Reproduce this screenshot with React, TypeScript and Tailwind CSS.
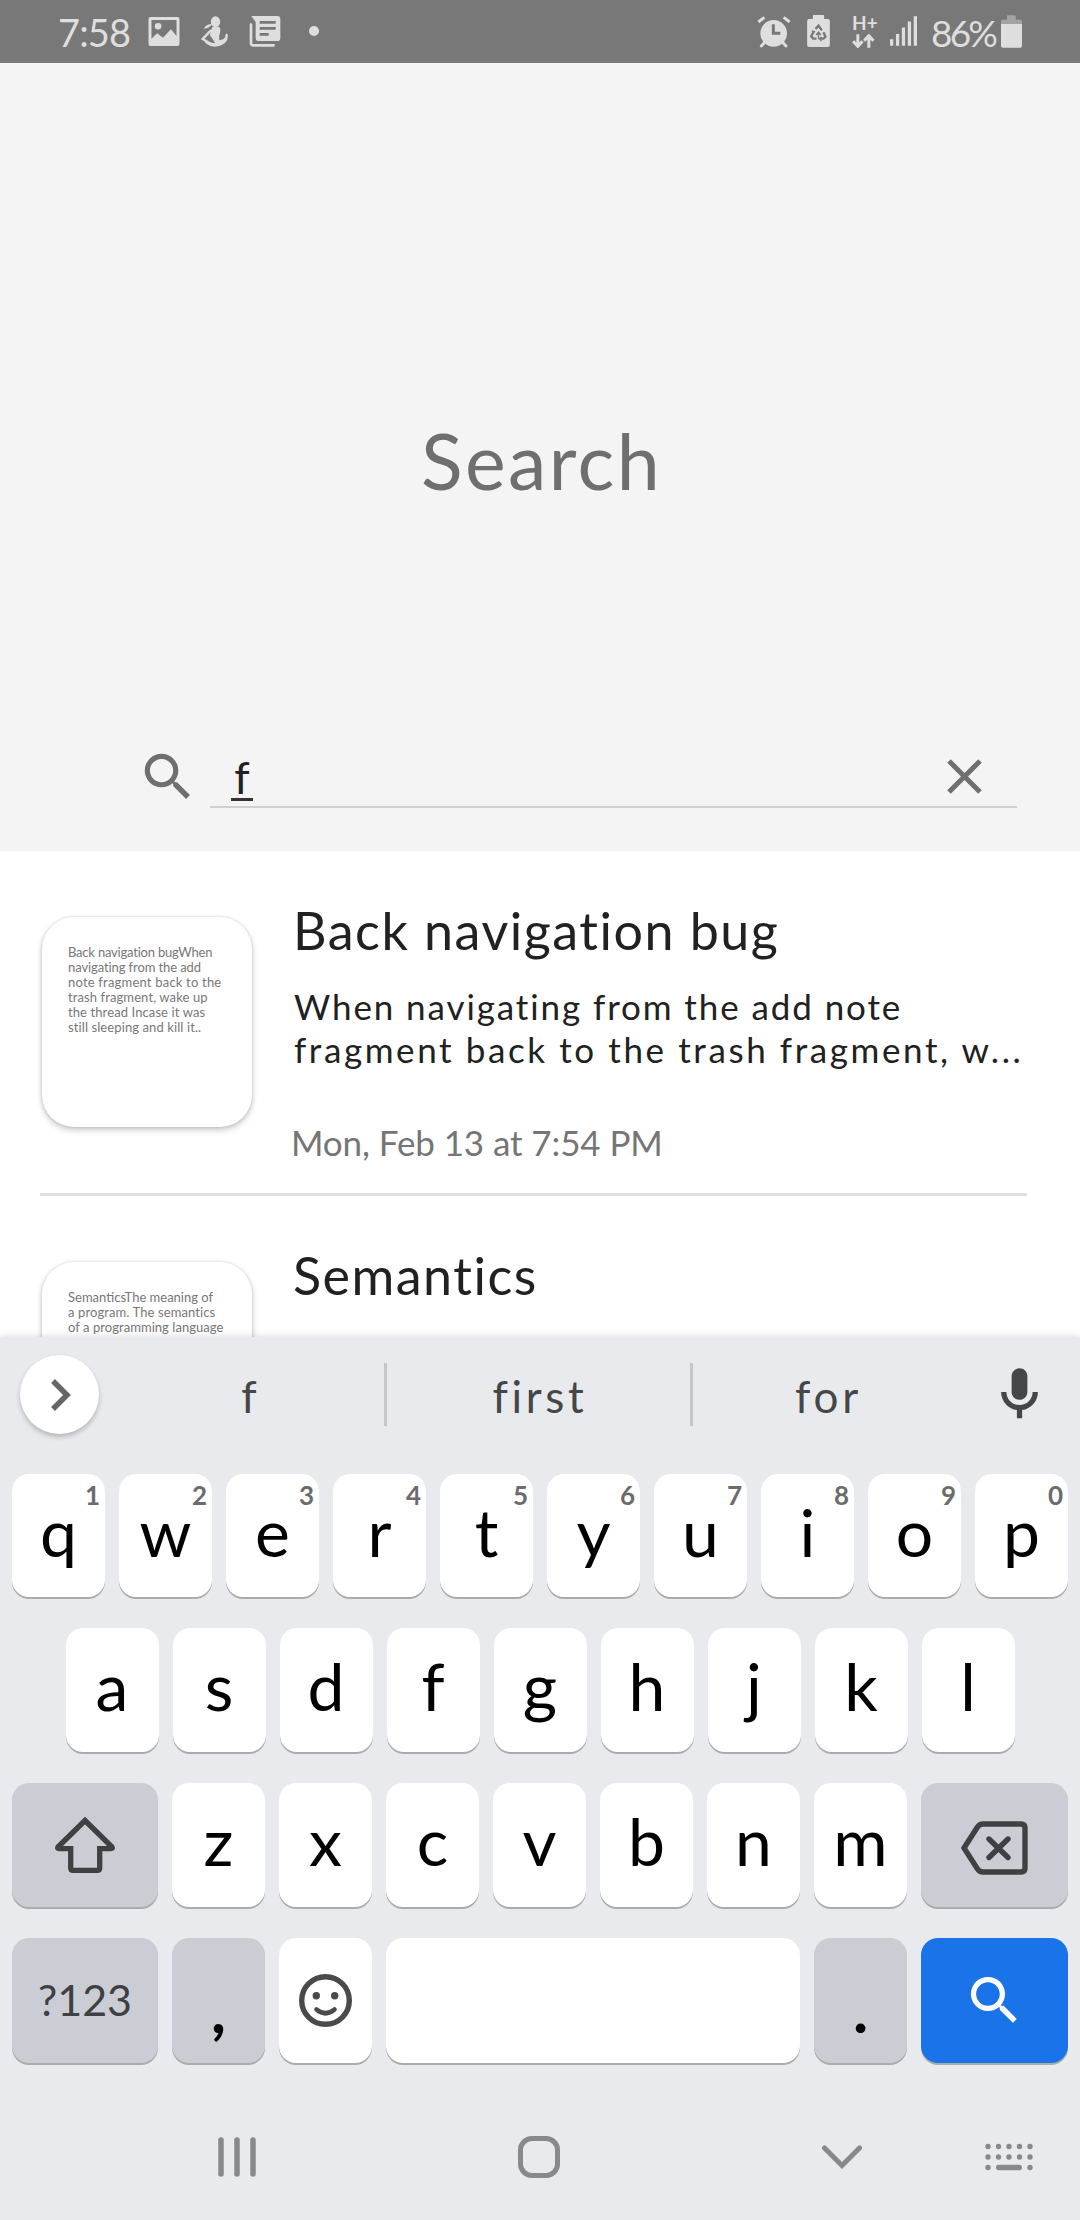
import type { ReactNode } from 'react';

const SEARCH_PATH =
  'M15.5 14h-.79l-.28-.27A6.471 6.471 0 0 0 16 9.5 6.5 6.5 0 1 0 9.5 16c1.61 0 3.09-.59 4.23-1.57l.27.28v.79l5 4.99L20.49 19l-4.99-5zm-6 0C7.01 14 5 11.99 5 9.5S7.01 5 9.5 5 14 7.01 14 9.5 11.99 14 9.5 14z';

function SearchIcon({ className }: { className: string }) {
  return (
    <svg viewBox="0 0 24 24" fill="currentColor" className={className}>
      <path d={SEARCH_PATH} />
    </svg>
  );
}

function StatusBar() {
  return (
    <header className="flex h-[63px] items-start justify-between bg-[#787878] pl-[58px] pr-[58px] text-[#dedede]">
      <div className="flex items-start">
        <span className="w-[90px] text-[38px] leading-[65px] tracking-[-0.9px]">7:58</span>
        <svg viewBox="0 0 94 88" className="mt-[17px] h-[29px] w-[32px]" fill="currentColor">
          <path
            fillRule="evenodd"
            d="M6 0h82q6 0 6 6v76q0 6-6 6H6q-6 0-6-6V6q0-6 6-6zm3 9v57l17-17 18 14 24-26 17 21V9z"
          />
          <circle cx="29" cy="28" r="10" />
        </svg>
        <svg viewBox="0 0 80 92" className="ml-[21px] mt-[16px] h-[31px] w-[27px]" fill="none" stroke="currentColor" strokeLinecap="round">
          <ellipse cx="43" cy="17" rx="14" ry="16" fill="currentColor" stroke="none" />
          <path d="M8 38Q14 25 33 23Q27 36 8 38z" fill="currentColor" stroke="none" />
          <path d="M32 32h22q6 8 3 16l-3 10v13q12 2 18-8q4-4 2-10q6 16-6 28q-14 10-28 10q-18-2-30-14q8-2 18 2l14 2q-10-18-16-24q3-17 8-25z" fill="currentColor" stroke="none" />
          <path d="M28 44L5 68l26 16M76 56q2 24-28 30" strokeWidth="7" />
        </svg>
        <svg viewBox="0 0 94 93" className="ml-[21px] mt-[16px] h-[31px] w-[32px]">
          <path d="M5 26v56q0 6 6 6h62" fill="none" stroke="currentColor" strokeWidth="8" strokeLinecap="round" />
          <path d="M6 0h78q9 0 9 9v56q0 10-9 10H28q-9 0-9-10V18z" fill="currentColor" />
          <path d="M31 19h48M31 37h48M31 55h27" stroke="#787878" strokeWidth="8" />
        </svg>
        <span className="ml-[28px] mt-[26px] size-[10px] rounded-full bg-current" />
      </div>
      <div className="flex items-start">
        <svg viewBox="0 0 102 96" className="mt-[16px] h-[32px] w-[34px]" fill="none" stroke="currentColor">
          <circle cx="50" cy="52" r="40" fill="currentColor" stroke="none" />
          <path d="M4 18L22 4M80 4l18 14" strokeWidth="9" />
          <path d="M24 78L13 90M76 78l11 12" strokeWidth="9" strokeLinecap="round" />
          <path d="M49 25v27h21" stroke="#787878" strokeWidth="9" />
        </svg>
        <svg viewBox="0 0 68 96" className="ml-[16px] mt-[15px] h-[32px] w-[23px]">
          <path d="M20 0h28q3 0 3 3v9h11q6 0 6 6v72q0 6-6 6H6q-6 0-6-6V18q0-6 6-6h11V3q0-3 3-3z" fill="currentColor" />
          <path d="M25 42l9-10 10 14M49 52l6 13-6 6H39M28 71H18l-6-7 7-13" fill="none" stroke="#787878" strokeWidth="7" />
          <path d="M34 72V52M27 60l7-9 7 9M14 48l10 3M43 66l-6 6 6 6" fill="none" stroke="#787878" strokeWidth="4" />
        </svg>
        <div className="ml-[22px] mt-[14px] w-[24px]">
          <p className="text-center text-[19px] font-bold leading-[18px]">H+</p>
          <svg viewBox="0 0 66 42" className="mt-[2px] h-[14px] w-[23px]" fill="none" stroke="currentColor" strokeWidth="9">
            <path d="M16 1v36M2 22l14 15 14-15M49 41V5M35 20L49 5l14 15" />
          </svg>
        </div>
        <svg viewBox="0 0 82 90" className="ml-[14px] mt-[16px] h-[30px] w-[27px]" fill="none" stroke="currentColor" strokeWidth="10">
          <path d="M5 70v20M23 54v36M41 34v56M59 16v74M77 0v90" />
        </svg>
        <span className="ml-[14px] w-[70px] text-[37px] leading-[65px] tracking-[-2.8px]">86%</span>
        <svg viewBox="0 0 64 99" className="mt-[15px] h-[33px] w-[21px]">
          <path d="M18 14V3q0-3 3-3h20q4 0 4 3v11h14q5 0 5 5v8H0v-8q0-5 5-5z" fill="#a3a3a3" />
          <path d="M0 27h64v66q0 6-6 6H6q-6 0-6-6z" fill="currentColor" />
        </svg>
      </div>
    </header>
  );
}

function SearchHeader() {
  return (
    <section className="h-[788px] bg-[#f4f4f4] pt-[352px] text-[#6f6f6f]">
      <h1 className="pl-[3px] text-center text-[77px] leading-[90px] tracking-[2.4px]">Search</h1>
      <div className="mt-[241px] flex pl-[137px]">
        <SearchIcon className="size-[62px]" />
        <div className="ml-[11px] flex h-[62px] w-[807px] items-start justify-between border-b-2 border-[#d0d0d0] pl-[21px] pr-[35px]">
          <span className="h-[55px] w-[22px] border-b-[3px] border-[#333] text-center text-[44px] leading-[62px] text-[#212121]">
            f
          </span>
          <svg viewBox="0 0 35 35" className="mt-[13px] size-[35px]" stroke="currentColor" strokeWidth="5">
            <path d="M2 2l31 31M33 2L2 33" />
          </svg>
        </div>
      </div>
    </section>
  );
}

function Note({ thumb, title, children }: { thumb: ReactNode; title: string; children?: ReactNode }) {
  return (
    <article className="ml-[40px] mr-[53px] flex h-[345px] border-b-[3px] border-[#e0e0e0] pl-[2px] pt-[66px]">
      <div className="size-[210px] shrink-0 whitespace-nowrap rounded-[32px] bg-white pl-[26px] pt-[28px] text-[13px] leading-[15px] text-[#777] shadow-[0_3px_6px_rgba(0,0,0,0.22),0_0_3px_rgba(0,0,0,0.14)]">
        {thumb}
      </div>
      <div className="ml-[40px] whitespace-nowrap text-[#212121]">
        <h2 className="-mt-[18px] ml-px text-[52px] leading-[62px] tracking-[1.5px]">{title}</h2>
        {children}
      </div>
    </article>
  );
}

function Results() {
  return (
    <main className="h-[486px] overflow-hidden bg-white">
      <Note
        title="Back navigation bug"
        thumb={
          <>
            <p className="tracking-[-0.2px]">Back navigation bugWhen</p>
            <p className="tracking-[-0.1px]">navigating from the add</p>
            <p className="tracking-[0.2px]">note fragment back to the</p>
            <p className="tracking-[0.1px]">trash fragment, wake up</p>
            <p className="tracking-[0.1px]">the thread Incase it was</p>
            <p className="tracking-[0.1px]">still sleeping and kill it..</p>
          </>
        }
      >
        <div className="ml-[2px] mt-[24px] text-[35px] leading-[43.3px]">
          <p className="tracking-[1.9px]">When navigating from the add note</p>
          <p className="tracking-[2.6px]">fragment back to the trash fragment, w...</p>
        </div>
        <p className="-ml-px mt-[49px] text-[35px] leading-[43px] tracking-[-0.1px] text-[#757575]">
          Mon, Feb 13 at 7:54 PM
        </p>
      </Note>
      <Note
        title="Semantics"
        thumb={
          <>
            <p>SemanticsThe meaning of</p>
            <p className="tracking-[0.1px]">a program. The semantics</p>
            <p className="tracking-[0.05px]">of a programming language</p>
          </>
        }
      />
    </main>
  );
}

const keyBase = 'relative flex items-center justify-center rounded-[17px] shadow-[0_2px_0_#a9abad]';

function LetterKey({ letter, hint }: { letter: string; hint?: string }) {
  return (
    <div className={`${keyBase} w-[93px] bg-white pb-[8px] text-[66px] leading-none text-black`}>
      {letter}
      {hint && (
        <span className="absolute right-[5px] top-[8px] text-[26px] font-bold leading-[26px] text-[#6b6b6b]">{hint}</span>
      )}
    </div>
  );
}

function Row({ letters, hints }: { letters: string; hints?: string }) {
  return (
    <>
      {letters.split('').map((l, i) => (
        <LetterKey key={l} letter={l} hint={hints?.[i]} />
      ))}
    </>
  );
}

function Keyboard() {
  return (
    <section className="relative h-[883px] bg-[#e8eaed] shadow-[0_0_8px_rgba(0,0,0,0.16)]">
      <div className="flex h-[115px] items-center pl-[20px] text-[44px] text-[#444648]">
        <div className="flex size-[79px] items-center justify-center rounded-full bg-white shadow-[0_3px_5px_rgba(0,0,0,0.22)]">
          <svg viewBox="0 0 20 32" className="ml-[2px] h-[32px] w-[20px]" fill="none" stroke="#666" strokeWidth="5.5">
            <path d="M2 2l14 14L2 30" />
          </svg>
        </div>
        <span className="ml-[15px] w-[270px] pt-[2px] text-center">f</span>
        <span className="h-[63px] w-[3px] bg-[#c4c6ca]" />
        <span className="w-[303px] pl-[3px] pt-[2px] text-center tracking-[3.7px]">first</span>
        <span className="h-[63px] w-[3px] bg-[#c4c6ca]" />
        <span className="w-[268px] pl-[3px] pt-[2px] text-center tracking-[3.7px]">for</span>
        <svg viewBox="0 0 24 24" className="ml-[27px] size-[63px]" fill="currentColor">
          <path d="M12 14c1.66 0 3-1.34 3-3V5c0-1.66-1.34-3-3-3S9 3.34 9 5v6c0 1.66 1.34 3 3 3z" />
          <path d="M17 11c0 2.76-2.24 5-5 5s-5-2.24-5-5H5c0 3.53 2.61 6.43 6 6.92V21h2v-3.08c3.39-.49 6-3.39 6-6.92h-2z" />
        </svg>
      </div>

      <div className="mt-[22px] flex flex-col gap-[31px] px-[12px]">
        <div className="flex h-[123px] gap-[14px]">
          <Row letters="qwertyuiop" hints="1234567890" />
        </div>
        <div className="flex h-[124px] justify-center gap-[14px]">
          <Row letters="asdfghjkl" />
        </div>
        <div className="flex h-[124px] gap-[14px]">
          <div className={`${keyBase} w-[146px] bg-[#cbcdd5]`}>
            <svg viewBox="0 0 60 58" className="h-[58px] w-[60px]" fill="none" stroke="#3f4042" strokeWidth="5.3">
              <path d="M30 4.5L57 31Q58 32.7 56 32.7H44.7V52q0 2.3-2.3 2.3H18q-2.3 0-2.3-2.3V32.7H4Q2 32.7 3 31z" />
            </svg>
          </div>
          <Row letters="zxcvbnm" />
          <div className={`${keyBase} flex-1 bg-[#cbcdd5]`}>
            <svg viewBox="0 0 67 54" className="mt-[5px] h-[54px] w-[67px]" fill="none" stroke="#3f4042" strokeWidth="5.4" strokeLinecap="round">
              <path d="M3 27L16.500 6Q18.500 3 22 3H60Q64 3 64 7V47Q64 51 60 51H22Q18.500 51 16.500 48z" />
              <path d="M28 18l19 18.500M47 18L28 36.500" />
            </svg>
          </div>
        </div>
        <div className="flex h-[125px] gap-[14px]">
          <div className={`${keyBase} w-[146px] bg-[#cbcdd5] text-[43px] text-[#3f4042]`}>?123</div>
          <div className={`${keyBase} w-[93px] bg-[#cbcdd5] pt-[16px] text-[64px] font-bold leading-none text-black`}>,</div>
          <div className={`${keyBase} w-[93px] bg-white`}>
            <svg viewBox="0 0 53 53" className="size-[53px]" fill="none" stroke="#4a4a4a">
              <circle cx="26.500" cy="26.500" r="23.800" strokeWidth="5.4" />
              <path d="M17.500 35.500q9 7.500 18 0" strokeWidth="4.600" strokeLinecap="round" />
              <circle cx="17.300" cy="21.700" r="3.700" fill="#4a4a4a" stroke="none" />
              <circle cx="35.700" cy="21.700" r="3.700" fill="#4a4a4a" stroke="none" />
            </svg>
          </div>
          <div className={`${keyBase} w-[414px] bg-white`} />
          <div className={`${keyBase} w-[93px] bg-[#cbcdd5] pt-[16px] text-[64px] font-bold leading-none text-black`}>.</div>
          <div className={`${keyBase} flex-1 bg-[#1a73e8] text-white`}>
            <SearchIcon className="size-[63px]" />
          </div>
        </div>
      </div>

      <nav className="mt-[73px] flex h-[42px] items-center pl-[218px] text-[#88898b]">
        <svg viewBox="0 0 38 42" className="h-[42px] w-[38px]" stroke="currentColor" strokeWidth="5.500" strokeLinecap="round">
          <path d="M3 4v34M19 4v34M35 4v34" />
        </svg>
        <span className="ml-[262px] size-[42px] rounded-[14px] border-[5px] border-current" />
        <svg viewBox="0 0 40 24" className="ml-[262px] h-[24px] w-[40px]" fill="none" stroke="currentColor" strokeWidth="5" strokeLinecap="round">
          <path d="M2.500 3L20 20.500 37.500 3" />
        </svg>
        <svg viewBox="0 0 48 28" className="ml-[123px] h-[28px] w-[48px]" fill="currentColor">
          {[3, 13.5, 24, 34.5, 45].map((x) => (
            <g key={x}>
              <circle cx={x} cy="3.500" r="2.700" />
              <circle cx={x} cy="14" r="2.700" />
            </g>
          ))}
          <circle cx="3" cy="24.500" r="2.700" />
          <circle cx="45" cy="24.500" r="2.700" />
          <rect x="11" y="21.800" width="26" height="5.400" rx="2.700" />
        </svg>
      </nav>
    </section>
  );
}

export default function App() {
  return (
    <div className="h-[2220px] w-[1080px] overflow-hidden bg-white font-['ChocoCooky','Lato',sans-serif]">
      <StatusBar />
      <SearchHeader />
      <Results />
      <Keyboard />
    </div>
  );
}
